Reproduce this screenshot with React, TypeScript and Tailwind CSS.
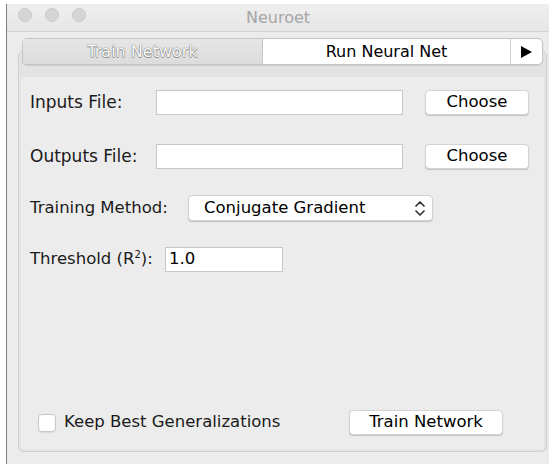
import React from "react";

function UpDown() {
  return (
    <svg width="12" height="17" viewBox="0 0 12 17" fill="none" stroke="#333" strokeWidth="1.7" strokeLinecap="round" strokeLinejoin="round">
      <path d="M2 6 L6 2 L10 6" />
      <path d="M2 11 L6 15 L10 11" />
    </svg>
  );
}

function Field({ w, value }: { w: string; value?: string }) {
  return (
    <div className={`${w} h-[25px] bg-white border border-[#c6c6c6] flex items-center pl-[3px] text-black`}>
      {value}
    </div>
  );
}

function PushButton({ w, label }: { w: string; label: string }) {
  return (
    <div className={`${w} h-[25px] bg-white rounded-[4px] border border-[#d4d4d4] shadow-[0_1px_1px_rgba(0,0,0,0.18)] flex items-center justify-center text-black`}>
      {label}
    </div>
  );
}

export default function App() {
  return (
    <div className="w-[549px] h-[464px] bg-white overflow-hidden font-['DejaVu_Sans',sans-serif] text-[16.5px] text-[#1a1a1a]">
      <div className="h-[4px] bg-white" />
      <div className="ml-[6px] h-[460px] border-l border-[#7d7d7d] bg-[#ececec] flex flex-col">
        {/* title bar */}
        <div className="h-[28px] shrink-0 bg-gradient-to-b from-[#efefef] to-[#e6e6e6] border-b border-[#d2d2d2] relative flex items-center justify-center">
          <div className="absolute left-[11px] top-[4px] flex gap-[13px]">
            <span className="w-[14px] h-[14px] rounded-full bg-[#d5d5d5] border border-[#cbcbcb]" />
            <span className="w-[14px] h-[14px] rounded-full bg-[#d5d5d5] border border-[#cbcbcb]" />
            <span className="w-[14px] h-[14px] rounded-full bg-[#d5d5d5] border border-[#cbcbcb]" />
          </div>
          <span className="text-[16px] text-[#a6a6a6]">Neuroet</span>
        </div>

        {/* tabbed pane */}
        <div className="ml-[11px] w-[529px] mt-[6px] flex flex-col">
          <div className="relative z-10 mx-[4px] h-[27px] flex rounded-[5px] border border-[#c4c4c4] bg-white shadow-[0_1px_1px_rgba(0,0,0,0.1)] overflow-hidden text-[16px]">
            <div className="w-[240px] bg-gradient-to-b from-[#e6e6e6] to-[#dcdcdc] border-r border-[#c8c8c8] flex items-center justify-center text-[#fbfbfb] [text-shadow:0_0_1px_#6f6f6f,0_0_1px_#6f6f6f,0_1px_0_#9a9a9a]">
              Train Network
            </div>
            <div className="flex-1 flex items-center justify-center text-black">Run Neural Net</div>
            <div className="w-[32px] border-l border-[#d0d0d0] flex items-center justify-center">
              <svg width="13" height="14" viewBox="0 0 13 14">
                <path d="M1 1 L12 7 L1 13 Z" fill="#000" />
              </svg>
            </div>
          </div>
          <div className="-mt-[14px] h-[401px] rounded-[5px] border border-[#d0d0d0] bg-[#e3e3e3] pt-[25px] px-[2px] pb-[2px] flex">
            <div className="flex-1 bg-[#ececec] flex flex-col pl-[9px] pt-[13px] pb-[14px]">
              <div className="flex items-center">
                <span className="w-[126px] text-[17px]">Inputs File:</span>
                <Field w="w-[247px]" />
                <div className="ml-[22px]">
                  <PushButton w="w-[104px]" label="Choose" />
                </div>
              </div>
              <div className="flex items-center mt-[28px]">
                <span className="w-[126px] text-[17px]">Outputs File:</span>
                <Field w="w-[247px]" />
                <div className="ml-[22px]">
                  <PushButton w="w-[104px]" label="Choose" />
                </div>
              </div>
              <div className="flex items-center mt-[26px]">
                <span className="w-[158px]">Training Method:</span>
                <div className="w-[245px] h-[26px] bg-white rounded-[4px] border border-[#d0d0d0] shadow-[0_1px_1px_rgba(0,0,0,0.18)] flex items-center pl-[15px] pr-[6px] justify-between text-black">
                  <span>Conjugate Gradient</span>
                  <UpDown />
                </div>
              </div>
              <div className="flex items-center mt-[26px]">
                <span className="w-[135px]">
                  Threshold (R<sup className="text-[10px] -top-[0.6em]">2</sup>):
                </span>
                <Field w="w-[118px]" value="1.0" />
              </div>
              <div className="flex-1" />
              <div className="flex items-center">
                <span className="ml-[8px] w-[18px] h-[18px] rounded-[4px] bg-white border border-[#c8c8c8] shadow-[0_1px_1px_rgba(0,0,0,0.08)]" />
                <span className="ml-[8px] w-[285px]">Keep Best Generalizations</span>
                <PushButton w="w-[154px]" label="Train Network" />
              </div>
            </div>
          </div>
        </div>
      </div>
    </div>
  );
}
